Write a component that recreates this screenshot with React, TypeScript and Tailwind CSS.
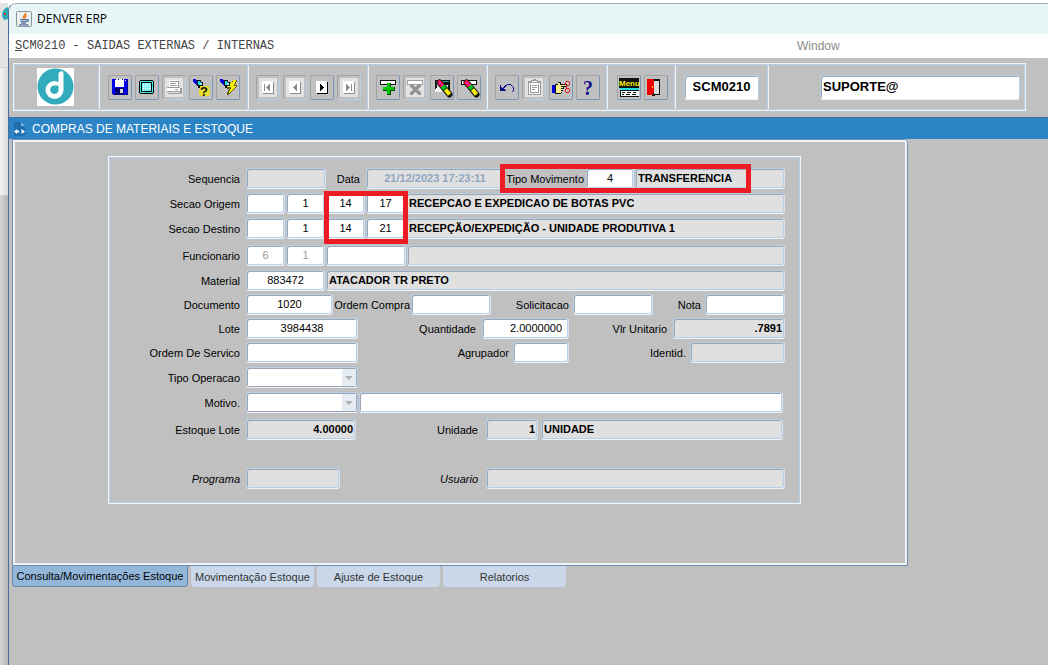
import type { ReactNode } from 'react';
import clsx from 'clsx';

type FieldProps = {
  id: string;
  label?: string;
  value?: string;
  className?: string;
  readOnly?: boolean;
};

function Field({ id, label, value = '', className, readOnly }: FieldProps) {
  return (
    <input
      id={id}
      aria-label={label}
      type="text"
      defaultValue={value}
      readOnly={readOnly}
      className={clsx(
        'h-[21px] min-w-0 rounded-[3px] border border-t-[#b8cfe5] border-l-[#b8cfe5] border-r-[#d5e2f0] border-b-[#eef4fa] px-0.5 pb-0.5 shadow-[inset_1px_1px_0_#9aa6b4,inset_-1px_-1px_0_#b8cfe5] outline-none',
        readOnly ? 'bg-[#e0e0e0] font-bold' : 'bg-white',
        className,
      )}
    />
  );
}

function Label({
  htmlFor,
  className,
  children,
}: {
  htmlFor: string;
  className: string;
  children: ReactNode;
}) {
  return (
    <label
      htmlFor={htmlFor}
      className={clsx('shrink-0 whitespace-nowrap text-right', className)}
    >
      {children}
    </label>
  );
}

function Combo({ id }: { id: string }) {
  return (
    <div className="relative w-[112px] shrink-0">
      <select
        id={id}
        className="block h-[21px] w-full appearance-none rounded-[3px] border border-[#b8cfe5] border-b-[#eef4fa] bg-white shadow-[inset_1px_1px_0_#9aa6b4,inset_-1px_-1px_0_#9aa6b4] outline-none"
      >
        <option></option>
      </select>
      <span className="pointer-events-none absolute top-0.5 right-0.5 flex h-[17px] w-3.5 items-center justify-center bg-[#e6ecf4]">
        <svg width="8" height="4" viewBox="0 0 8 4">
          <path d="M0 0h8L4 4z" fill="#b0b0b0" />
        </svg>
      </span>
    </div>
  );
}

function ToolButton({
  title,
  disabled,
  children,
}: {
  title: string;
  disabled?: boolean;
  children: ReactNode;
}) {
  return (
    <button
      type="button"
      title={title}
      aria-label={title}
      disabled={disabled}
      className={clsx(
        'h-[25px] w-6 shrink-0 rounded-[2px] border border-t-[#a2a2a2] border-l-[#a2a2a2]',
        disabled
          ? 'border-r-[#b8cfe5] border-b-[#b8cfe5]'
          : 'border-r-[#7a96b8] border-b-[#7a96b8]',
      )}
    >
      <svg
        width="22"
        height="23"
        viewBox="0 0 22 23"
        shapeRendering="crispEdges"
      >
        {disabled && <path d="M2 2h18v19H2z" fill="#e2e2e2" />}
        {children}
      </svg>
    </button>
  );
}

function Section({
  className,
  children,
}: {
  className?: string;
  children: ReactNode;
}) {
  return (
    <div
      className={clsx(
        'flex shrink-0 items-center border-r border-[#eef4fa] shadow-[inset_-1px_0_0_#b8cfe5]',
        className,
      )}
    >
      {children}
    </div>
  );
}

// white page with a drop shadow, shared by the record navigation buttons
function NavPage({ color, d }: { color: string; d: string }) {
  return (
    <>
      <path d="M6 17h10V6h1v12H6z" fill={color} />
      <path d="M5 5h11v12H5z" fill="#fff" />
      <path d={d} fill={color} />
    </>
  );
}

function Flashlight() {
  return (
    <>
      <path d="M3 3h3v1h2v1h1v5H7V9H6V8H5V7H4V6H3z" fill="#0000d8" />
      <path d="M7 4h4v2h2v4h-3v2H8v-2H7z" fill="#111" />
      <path d="M8 5h2v1h1v2h-1v1H8z" fill="#20d8e0" />
      <path d="M10 7h2v2h-2z" fill="#9af8f8" />
    </>
  );
}

function Crayon() {
  return (
    <g fill="none" shapeRendering="auto">
      <path d="M8.500 6.500L18.500 18.500" stroke="#111" strokeWidth="6" strokeLinecap="round" />
      <path d="M8.500 6.500L11.500 10" stroke="#f01030" strokeWidth="4.500" strokeLinecap="round" />
      <path d="M11.500 10L14 13" stroke="#00c020" strokeWidth="4.500" />
      <path d="M14.500 13.500L18.500 18.500" stroke="#f8f000" strokeWidth="4" />
      <path d="M8 6h2v2H8zM11 8h1v2h-1z" fill="#f020f0" />
    </g>
  );
}

function Logo() {
  return (
    <svg width="37" height="38" viewBox="0 0 37 38" aria-label="Denver">
      <path d="M0 0h37v38H0z" fill="#fff" />
      <circle cx="18.500" cy="18.500" r="18" fill="#32abbd" />
      <circle cx="17.500" cy="22" r="9" fill="#fff" />
      <path d="M21.500 6C21.500 3 26.500 2 26.500 5v17h-5z" fill="#fff" />
      <path d="M17 17.500c2.500 0 4.500-.5 4.500 1V21a4.200 4.200 0 1 1-4.500-3.500z" fill="#32abbd" />
    </svg>
  );
}

function JavaIcon() {
  return (
    <svg width="16" height="16" viewBox="0 0 16 16">
      <rect x=".5" y=".5" width="15" height="15" rx="1" fill="#eef1f2" stroke="#8796a0" />
      <path d="M9.500 1.800c.8 2.200-3.300 3-2 5.700M10.800 4.300C8.500 5.200 8.800 6.300 8.800 7.800" fill="none" stroke="#e8811c" strokeWidth="1.500" />
      <path d="M4 8.700h7M4.500 10.500h6M5 12.200h5M11 8.700c2-.3 2 1.600-.5 2M3 13.800h9.500" fill="none" stroke="#4f6f98" strokeWidth="1.200" />
    </svg>
  );
}

function Toolbar() {
  return (
    <div className="mt-[5px] mr-[22px] ml-1 flex h-12 border border-[#eef4fa] p-px shadow-[inset_0_0_0_1px_#b8cfe5]">
      <Section className="w-[85px] justify-center pr-1">
        <Logo />
      </Section>
      <Section className="w-[149px] gap-[3px] pl-2">
        <ToolButton title="Salvar">
          <path d="M3 3h16v16H4v-1H3z" fill="#00008b" />
          <path d="M3 3h15v15H4v-1H3z" fill="#0000f0" />
          <path d="M6 3h9v8H6zM16 4h1v1h-1z" fill="#fff" />
          <path d="M6 3h1v1H6zM9 3h1v1H9zM13 3h1v1h-1z" fill="#00008b" />
          <path d="M6 12h9v6H6z" fill="#000070" />
          <path d="M11 13h3v4h-3z" fill="#d8d8d8" />
        </ToolButton>
        <ToolButton title="Tela">
          <path d="M4 4h13v1h1v12h-1v1H4v-1H3V5h1z" fill="#000" />
          <path d="M4 5h13v12H4z" fill="#40e8e8" />
          <path d="M5 6h11v10H5z" fill="#000" />
          <path d="M6 7h9v8H6z" fill="#7ff4f4" />
          <path d="M7 8h1v1H7zM9 8h1v1H9zM11 8h1v1h-1zM13 8h1v1h-1zM7 10h1v1H7zM9 10h1v1H9zM11 10h1v1h-1zM13 10h1v1h-1zM7 12h1v1H7zM9 12h1v1H9zM11 12h1v1h-1zM13 12h1v1h-1z" fill="#fff" />
        </ToolButton>
        <ToolButton title="Imprimir" disabled>
          <path d="M6 4h9v7H6zM4 11h14v4H4z" fill="#fff" />
          <path d="M7 5h8v1H7zM7 7h6v1H7zM7 9h7v1H7zM15 5h1v6h-1zM4 11h13v1H4zM17 12h2v5h-2zM4 15h13v1H4zM5 17h14v1H5zM12 13h3v1h-3z" fill="#9b9b9b" />
        </ToolButton>
        <ToolButton title="Entrar consulta">
          <path d="M10 10h9v10h-9zM9 13h11v6H9z" fill="#f0e800" opacity=".75" />
          <Flashlight />
          <text x="10" y="20" fill="#111" fontSize="13" fontWeight="bold">?</text>
        </ToolButton>
        <ToolButton title="Executar consulta">
          <path d="M16 4h4v2h-1v2h-1v1h2v2h-1v1h-1v1h-1v1h-1v1h-1v1h-1v1h-1v1h-1v1h-2v-3h1v-2h1v-1h-2v-2h1v-2h1V8h1V6h2z" fill="#5a5a00" />
          <path d="M16 4h3v2h-1v2h-1v2h2v1h-1v1h-1v1h-1v1h-1v1h-1v1h-1v1h-1v-2h1v-2h1v-2h-3v-1h1V9h1V7h1V6h2z" fill="#f8f000" />
          <Flashlight />
        </ToolButton>
      </Section>
      <Section className="w-[120px] gap-[3px] pl-[7px]">
        <ToolButton title="Primeiro registro" disabled>
          <NavPage color="#8c8c8c" d="M7 8h1v7H7zM12 8h1v7h-1v-1h-1v-1h-1v-1H9v-1h1v-1h1V9h1z" />
        </ToolButton>
        <ToolButton title="Registro anterior" disabled>
          <NavPage color="#8c8c8c" d="M12 8h1v7h-1v-1h-1v-1h-1v-1H9v-1h1v-1h1V9h1z" />
        </ToolButton>
        <ToolButton title="Proximo registro">
          <NavPage color="#000" d="M9 8h1v1h1v1h1v1h1v1h-1v1h-1v1h-1v1H9z" />
        </ToolButton>
        <ToolButton title="Ultimo registro" disabled>
          <NavPage color="#8c8c8c" d="M8 8h1v1h1v1h1v1h1v1h-1v1h-1v1H9v1H8zM13 8h1v7h-1z" />
        </ToolButton>
      </Section>
      <Section className="w-[119px] gap-[3px] pl-[7px]">
        <ToolButton title="Inserir registro">
          <path d="M3 4h16v5H3z" fill="#111" />
          <path d="M4 5h14v3H4z" fill="#fff" />
          <path d="M10 7h4v4h4v4h-4v4h-4v-4H6v-4h4z" fill="#064806" />
          <path d="M10 7h3v4h4v3h-4v4h-3v-4H6v-3h4z" fill="#00c800" />
        </ToolButton>
        <ToolButton title="Remover registro" disabled>
          <path d="M3 4h16v5H3z" fill="#a0a0a0" />
          <path d="M4 5h14v3H4z" fill="#fff" />
          <path d="M6 8h3v1h1v1h1v1h1v-1h1V9h1V8h3v3h-1v1h-1v1h-1v1h1v1h1v1h1v3h-3v-1h-1v-1h-1v-1h-1v1h-1v1H9v1H6v-3h1v-1h1v-1h1v-1H8v-1H7v-1H6z" fill="#959595" />
        </ToolButton>
        <ToolButton title="Limpar tela">
          <path d="M4 4h15v10H4z" fill="#111" />
          <path d="M5 5h13v1H5zM5 8h4v1H5z" fill="#20a0a0" />
          <path d="M6 9h11v4H6z" fill="#d0d8d8" />
          <path d="M4 13l3-2h4v5H4z" fill="#f2f2f2" />
          <Crayon />
        </ToolButton>
        <ToolButton title="Limpar registro">
          <path d="M3 4h16v5H3z" fill="#111" />
          <path d="M4 5h14v3H4z" fill="#fff" />
          <Crayon />
        </ToolButton>
      </Section>
      <Section className="w-[120px] gap-[3px] pl-[7px]">
        <ToolButton title="Desfazer">
          <path d="M4 9h1v2h1v1h1v-1h1v-1h1V9h2V8h4v1h1v1h1v1h1v4h-1v1h-1v-1h1v-4h-1v-1h-1V9h-4v1h-1v1H9v1H8v1h1v1h1v1H4z" fill="#10108a" />
        </ToolButton>
        <ToolButton title="Lista" disabled>
          <path d="M8 4h2V3h3v1h2v1h3v14H5V5h3z" fill="#999" />
          <path d="M9 5h5v1H9zM6 7h11v11H6z" fill="#fff" />
          <path d="M7 8h9v9H7z" fill="#999" />
          <path d="M8 8h7v8H8z" fill="#fff" />
          <path d="M9 9h5v1H9zM9 11h5v1H9zM9 13h3v1H9z" fill="#999" />
        </ToolButton>
        <ToolButton title="Recortar">
          <path d="M2 9h3v8H2z" fill="#0000e0" />
          <path d="M5 8h3V6h3v2h6v3h-3v2h-1v2h-1v2h-1v1H5z" fill="#111" />
          <path d="M6 9h2V7h2v2h6v1h-5v1h2v1h-2v1h2v1h-2v1h1v1h-1v1H6z" fill="#f6ee90" />
          <path d="M16 5h3v1h1v3h-1v1h-2v2h2v1h1v3h-1v1h-3v-1h-1v-3h1v-4h-1V6h1zm0 1v3h3V6zm0 7v3h3v-3z" fill="#e81818" fillRule="evenodd" />
        </ToolButton>
        <ToolButton title="Ajuda">
          <text x="6" y="19" fill="#10108a" fontSize="20" fontWeight="bold" fontFamily="Liberation Serif, serif">?</text>
        </ToolButton>
      </Section>
      <Section className="w-[68px] gap-[3px] pl-[9px]">
        <ToolButton title="Menu">
          <path d="M1 2h20v10H1z" fill="#111" />
          <text x="1" y="10" fill="#f8f000" fontSize="8" fontWeight="bold">Menu</text>
          <path d="M2 12h19v2H2z" fill="#20e0e0" />
          <path d="M2 14h19v7H2z" fill="#111" />
          <path d="M3 15h18v5H3z" fill="#fff" />
          <path d="M4 16h3v1H4zM9 16h4v1H9zM15 16h3v1h-3zM4 18h2v1H4zM8 18h4v1H8zM14 18h4v1h-4z" fill="#111" />
        </ToolButton>
        <ToolButton title="Sair">
          <path d="M3 3h12v16h-5v1H7v-1H3z" fill="#111" />
          <path d="M9 5h5v13H9z" fill="#ddd" />
          <path d="M2 3h7v14H8v2H2z" fill="#f00000" />
          <path d="M7 10h1v2H7z" fill="#f8f000" />
        </ToolButton>
      </Section>
      <Section className="w-[93px] pl-2">
        <input
          aria-label="Codigo do programa"
          defaultValue="SCM0210"
          className="h-[25px] w-[75px] rounded-[3px] border border-[#b8cfe5] border-b-[#eef4fa] bg-white pb-px text-center text-[13px] font-bold shadow-[inset_1px_1px_0_#9aa6b4] outline-none"
        />
      </Section>
      <div className="flex min-w-0 flex-1 items-center pr-1 pl-[51px]">
        <input
          aria-label="Usuario conectado"
          defaultValue="SUPORTE@"
          className="h-[25px] w-full rounded-[3px] border border-[#b8cfe5] border-b-[#eef4fa] bg-white px-0.5 pb-px text-[13px] font-bold shadow-[inset_1px_1px_0_#9aa6b4] outline-none"
        />
      </div>
    </div>
  );
}

// first label of every row, so all rows start their fields on one line
const rowLabel = 'w-[136px] pr-1.5';

function MovementForm() {
  return (
    <form className="mt-3.5 ml-[93px] flex h-[348px] max-w-[693px] flex-col border border-[#eef4fa] p-px pt-[11px] pr-[15px] shadow-[inset_0_0_0_1px_#b8cfe5]">
      <div className="flex items-center">
        <Label htmlFor="sequencia" className={rowLabel}>Sequencia</Label>
        <Field id="sequencia" readOnly className="w-20" />
        <Label htmlFor="data" className="w-10 pr-1.5">Data</Label>
        <Field id="data" readOnly value="21/12/2023 17:23:11" className="w-[138px] text-center text-[#8fa6c2]" />
        <div className="relative flex min-w-0 flex-1 items-center">
          <Label htmlFor="tipo-movimento" className="w-[82px] pr-0.5">Tipo Movimento</Label>
          <Field id="tipo-movimento" value="4" className="w-12 text-center" />
          <Field id="tipo-movimento-descr" label="Descricao do tipo" readOnly value="TRANSFERENCIA" className="ml-px flex-1" />
          <div className="pointer-events-none absolute -top-1 -left-1 h-[29px] w-[251px] border-[5px] border-[#ed1c24]" />
        </div>
      </div>

      <div className="mt-1 flex items-center gap-px">
        <Label htmlFor="origem" className={rowLabel}>Secao Origem</Label>
        <Field id="origem" className="-ml-px w-[39px]" />
        <Field id="origem-2" label="Origem empresa" value="1" className="w-[39px] text-center" />
        <div className="relative flex gap-px">
          <Field id="origem-3" label="Origem filial" value="14" className="w-[39px] text-center" />
          <Field id="origem-4" label="Origem secao" value="17" className="w-[39px] text-center" />
          <div className="pointer-events-none absolute -top-0.5 -left-0.5 z-10 h-[53px] w-[84px] border-[5px] border-[#ed1c24]" />
        </div>
        <Field id="origem-descr" label="Descricao da origem" readOnly value="RECEPCAO E EXPEDICAO DE BOTAS PVC" className="flex-1" />
      </div>

      <div className="mt-1 flex items-center gap-px">
        <Label htmlFor="destino" className={rowLabel}>Secao Destino</Label>
        <Field id="destino" className="-ml-px w-[39px]" />
        <Field id="destino-2" label="Destino empresa" value="1" className="w-[39px] text-center" />
        <Field id="destino-3" label="Destino filial" value="14" className="w-[39px] text-center" />
        <Field id="destino-4" label="Destino secao" value="21" className="w-[39px] text-center" />
        <Field id="destino-descr" label="Descricao do destino" readOnly value="RECEPÇÃO/EXPEDIÇÃO - UNIDADE PRODUTIVA 1" className="flex-1" />
      </div>

      <div className="mt-1.5 flex items-center gap-px">
        <Label htmlFor="funcionario" className={rowLabel}>Funcionario</Label>
        <Field id="funcionario" value="6" className="-ml-px w-[39px] text-center text-[#999]" />
        <Field id="funcionario-2" label="Funcionario filial" value="1" className="w-[39px] text-center text-[#999]" />
        <Field id="funcionario-3" label="Matricula" className="w-20" />
        <Field id="funcionario-nome" label="Nome do funcionario" readOnly className="flex-1" />
      </div>

      <div className="mt-1 flex items-center gap-px">
        <Label htmlFor="material" className={rowLabel}>Material</Label>
        <Field id="material" value="883472" className="-ml-px w-[79px] text-center" />
        <Field id="material-descr" label="Descricao do material" readOnly value="ATACADOR TR PRETO" className="flex-1" />
      </div>

      <div className="mt-[3px] flex items-center">
        <Label htmlFor="documento" className={rowLabel}>Documento</Label>
        <Field id="documento" value="1020" className="w-[87px] text-center" />
        <Label htmlFor="ordem-compra" className="w-[78px] pr-px">Ordem Compra</Label>
        <Field id="ordem-compra" className="w-20" />
        <Label htmlFor="solicitacao" className="w-[82px] pr-1">Solicitacao</Label>
        <Field id="solicitacao" className="w-20" />
        <Label htmlFor="nota" className="w-[52px] pr-1">Nota</Label>
        <Field id="nota" className="flex-1" />
      </div>

      <div className="mt-[3px] flex items-center">
        <Label htmlFor="lote" className={rowLabel}>Lote</Label>
        <Field id="lote" value="3984438" className="w-[112px] text-center" />
        <Label htmlFor="quantidade" className="w-[124px] pr-1.5">Quantidade</Label>
        <Field id="quantidade" value="2.0000000" className="w-[87px] pr-1.5 text-right" />
        <Label htmlFor="vlr-unitario" className="w-[104px] pr-1.5">Vlr Unitario</Label>
        <Field id="vlr-unitario" readOnly value=".7891" className="flex-1 text-right" />
      </div>

      <div className="mt-[3px] flex items-center">
        <Label htmlFor="ordem-servico" className={rowLabel}>Ordem De Servico</Label>
        <Field id="ordem-servico" className="w-[112px]" />
        <Label htmlFor="agrupador" className="w-[155px] pr-1">Agrupador</Label>
        <Field id="agrupador" className="w-14" />
        <Label htmlFor="identid" className="w-[121px] pr-1">Identid.</Label>
        <Field id="identid" readOnly className="flex-1" />
      </div>

      <div className="mt-1 flex items-center">
        <Label htmlFor="tipo-operacao" className={rowLabel}>Tipo Operacao</Label>
        <Combo id="tipo-operacao" />
      </div>

      <div className="mt-1 flex items-center pr-0.5">
        <Label htmlFor="motivo" className={rowLabel}>Motivo.</Label>
        <Combo id="motivo" />
        <Field id="motivo-descr" label="Descricao do motivo" className="ml-px flex-1" />
      </div>

      <div className="mt-1.5 flex items-center pr-0.5">
        <Label htmlFor="estoque-lote" className={rowLabel}>Estoque Lote</Label>
        <Field id="estoque-lote" readOnly value="4.00000" className="w-[110px] text-right" />
        <Label htmlFor="unidade" className="w-[130px] pr-2">Unidade</Label>
        <Field id="unidade" readOnly value="1" className="w-[52px] text-right" />
        <Field id="unidade-descr" label="Descricao da unidade" readOnly value="UNIDADE" className="ml-[3px] flex-1" />
      </div>

      <div className="mt-7 flex items-center">
        <Label htmlFor="programa" className={clsx(rowLabel, 'italic')}>Programa</Label>
        <Field id="programa" readOnly className="w-[94px]" />
        <Label htmlFor="usuario" className="w-[146px] pr-2 italic">Usuario</Label>
        <Field id="usuario" readOnly className="flex-1" />
      </div>
    </form>
  );
}

const otherTabs = ['Movimentação Estoque', 'Ajuste de Estoque', 'Relatorios'];

export default function App() {
  return (
    <div className="flex min-h-screen bg-white pt-[3px] font-['Liberation_Sans',Arial,sans-serif] text-[11px] leading-4 text-black">
      <div className="flex w-2 shrink-0 flex-col bg-linear-to-r from-[#d6d6d6] to-[#b4b4b4]">
        <div className="flex h-16 justify-end bg-[#e4e4e4] pt-1">
          <svg width="6" height="13" viewBox="0 0 6 13">
            <path d="M6 0C1 2 0 5 0 9l2 4 4-1z" fill="#2aa8b8" />
            <path d="M2 6h2v2H2z" fill="#e03030" />
          </svg>
        </div>
        <div className="h-32 border-t border-[#d4d4d4] bg-linear-to-r from-[#f2f2f2] to-[#dcdcdc]" />
      </div>

      <div className="flex min-w-0 flex-1 flex-col overflow-hidden rounded-tl-lg border-t border-l border-t-[#a8b0b2] border-l-[#4b6f9c] bg-[#c0c0c0]">
        <header className="flex h-[30px] items-center gap-[5px] bg-[#e8f5f7] pl-[7px] font-['Open_Sans','Noto_Sans',sans-serif] text-xs">
          <JavaIcon />
          <h1>DENVER ERP</h1>
        </header>

        <nav className="flex h-6 items-center bg-white pl-1.5">
          <button type="button" className="w-[782px] text-left font-['Liberation_Mono','Courier_New',monospace] text-xs text-[#444]">
            <u>S</u>CM0210 - SAIDAS EXTERNAS / INTERNAS
          </button>
          <button type="button" className="text-xs text-[#8c8c8c]">
            Window
          </button>
        </nav>

        <Toolbar />

        <div className="mt-1.5 flex h-[22px] shrink-0 items-center gap-1.5 border-t border-[#44709c] bg-[#2b84c6] pl-1 text-xs text-white">
          <svg width="13" height="14" viewBox="0 0 13 14">
            <path d="M1 0h7l4 4v10H1z" fill="#1f6fae" />
            <path d="M8 0l4 4H8z" fill="#7fb8e4" />
            <path d="M1 9.500l3-2.500v1.500h2v2H4V12zM12 9.500L8.500 7v5z" fill="#fff" />
          </svg>
          <h2>COMPRAS DE MATERIAIS E ESTOQUE</h2>
        </div>

        <main className="mx-[3px]">
          <div className="max-w-[896px] rounded-tr-[4px] border border-[#6f8fb2]">
            <div className="h-[425px] rounded-tr-[3px] border-2 border-[#eef4fa]">
              <MovementForm />
            </div>
          </div>
          <div role="tablist" className="flex gap-[3px]">
            <button type="button" role="tab" aria-selected="true" className="h-[21px] w-44 rounded-b-[4px] border border-t-0 border-[#6488b0] bg-[#93b7d9]">
              Consulta/Movimentações Estoque
            </button>
            {otherTabs.map((tab) => (
              <button key={tab} type="button" role="tab" aria-selected="false" className="h-[21px] w-[123px] rounded-b-[4px] bg-[#cad8ea] text-[#333]">
                {tab}
              </button>
            ))}
          </div>
        </main>
      </div>
    </div>
  );
}
